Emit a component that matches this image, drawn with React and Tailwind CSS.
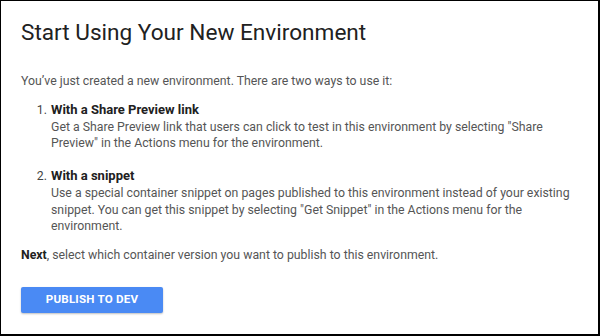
export default function App() {
    return (
        <div
            className="w-[600px] h-[336px] bg-white border-l border-t border-r-2 border-b-2 border-black overflow-hidden"
            style={{ fontFamily: "Roboto, 'Liberation Sans', sans-serif" }}
        >
            <div className="pl-[20px] pr-4">
                <h1 className="pt-[18px] text-[22.6px] leading-[28px] text-[#212121] font-normal">
                    Start Using Your New Environment
                </h1>

                <p className="mt-[26px] text-[12.3px] leading-[17px] text-[#555]">
                    You’ve just created a new environment. There are two ways to use it:
                </p>

                <ol className="mt-[12px] pl-[30px] text-[12.3px] leading-[16.7px] text-[#555]">
                    <li className="relative">
                        <span className="absolute -left-[4px] -translate-x-full text-[#444]">1.</span>
                        <div className="font-bold text-[#212121] text-[13px]">With a Share Preview link</div>
                        <div className="w-[530px]">
                            Get a Share Preview link that users can click to test in this environment by selecting "Share Preview" in the Actions menu for the environment.
                        </div>
                    </li>
                    <li className="relative mt-[16px]">
                        <span className="absolute -left-[4px] -translate-x-full text-[#444]">2.</span>
                        <div className="font-bold text-[#212121] text-[13px]">With a snippet</div>
                        <div className="w-[530px]">
                            Use a special container snippet on pages published to this environment instead of your existing snippet. You can get this snippet by selecting "Get Snippet" in the Actions menu for the environment.
                        </div>
                    </li>
                </ol>

                <p className="mt-[12px] text-[12.3px] leading-[17px] text-[#555]">
                    <span className="font-bold text-[#212121]">Next</span>, select which container version you want to publish to this environment.
                </p>

                <button className="mt-[23px] w-[142px] h-[26px] bg-[#4a8af4] rounded-[2px] text-white text-[11.6px] font-bold tracking-[0.2px] shadow-[0_1px_2px_rgba(0,0,0,0.25)]">
                    PUBLISH TO DEV
                </button>
            </div>
        </div>
    );
}
